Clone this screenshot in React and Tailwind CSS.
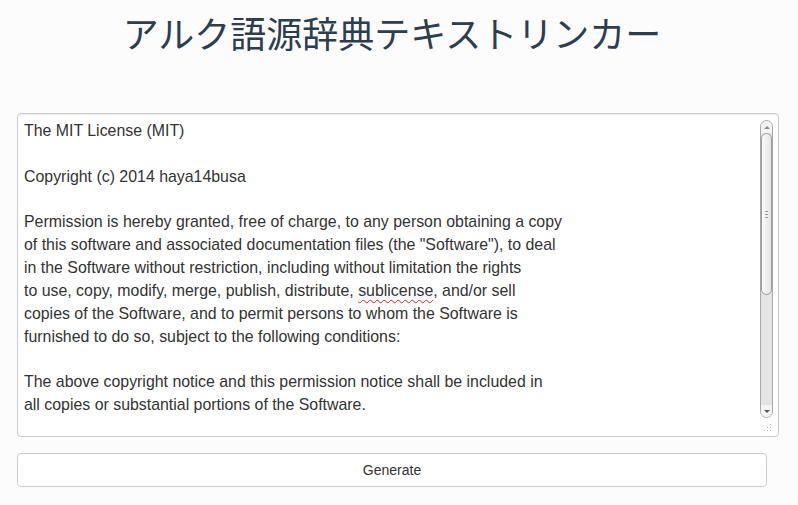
import React from 'react'

const body = [
  'Permission is hereby granted, free of charge, to any person obtaining a copy',
  'of this software and associated documentation files (the "Software"), to deal',
  'in the Software without restriction, including without limitation the rights',
]

export default function App() {
  return (
    <div className="min-h-screen w-[798px] h-[505px] overflow-hidden bg-[#fcfcfc]" style={{ fontFamily: '"Liberation Sans", Arial, sans-serif' }}>
      {/* Title */}
      <h1
        className="pt-[12px] pr-[14px] text-center text-[36px] leading-[40px] text-[#2c3e50]"
        style={{ fontFamily: '"Noto Sans CJK JP", "Noto Sans", sans-serif' }}
      >
        アルク語源辞典テキストリンカー
      </h1>

      {/* Textarea */}
      <div className="mt-[61px] ml-[17px] flex h-[324px] w-[762px] rounded-[4px] border border-[#cccccc] bg-white shadow-[inset_0_1px_1px_rgba(0,0,0,0.075)]">
        <div className="flex-1 overflow-hidden pl-[6px] pt-[6px] text-[15.9px] leading-[22.86px] text-[#333333] whitespace-pre">
          <div>The MIT License (MIT)</div>
          <div>&nbsp;</div>
          <div>Copyright (c) 2014 haya14busa</div>
          <div>&nbsp;</div>
          {body.map((l, i) => <div key={i}>{l}</div>)}
          <div>
            to use, copy, modify, merge, publish, distribute,{' '}
            <span className="underline decoration-wavy decoration-[#e02020] decoration-1 underline-offset-[3px]">sublicense</span>, and/or sell
          </div>
          <div>copies of the Software, and to permit persons to whom the Software is</div>
          <div>furnished to do so, subject to the following conditions:</div>
          <div>&nbsp;</div>
          <div>The above copyright notice and this permission notice shall be included in</div>
          <div>all copies or substantial portions of the Software.</div>
        </div>

        {/* Scrollbar */}
        <div className="mr-[5px] flex w-[13px] flex-col pt-[6px]">
          <div className="flex h-[298px] flex-col rounded-[7px] border border-[#a8a8a8] bg-[#e4e4e4]">
            <div className="flex h-[12px] items-center justify-center rounded-t-[6px] bg-[#f4f4f4]">
              <div className="h-0 w-0 border-x-[3px] border-b-[3px] border-x-transparent border-b-[#8a8a8a]" />
            </div>
            <div className="flex h-[162px] flex-col items-center justify-center gap-[2px] rounded-[6px] border border-[#9a9a9a] bg-gradient-to-r from-[#fafafa] to-[#e6e6e6]">
              <div className="h-px w-[3px] bg-[#999]" />
              <div className="h-px w-[3px] bg-[#999]" />
              <div className="h-px w-[3px] bg-[#999]" />
            </div>
            <div className="flex-1" />
            <div className="flex h-[12px] items-center justify-center rounded-b-[6px] bg-[#f4f4f4]">
              <div className="h-0 w-0 border-x-[3px] border-t-[3px] border-x-transparent border-t-[#555]" />
            </div>
          </div>
          <div className="mt-[6px] flex justify-end pr-[1px]">
            <svg width="10" height="9" viewBox="0 0 10 9">
              <g fill="#b0b0b0">
                <rect x="8" y="0" width="1" height="1" />
                <rect x="5" y="3" width="1" height="1" />
                <rect x="8" y="3" width="1" height="1" />
                <rect x="2" y="6" width="1" height="1" />
                <rect x="5" y="6" width="1" height="1" />
                <rect x="8" y="6" width="1" height="1" />
              </g>
            </svg>
          </div>
        </div>
      </div>

      {/* Button */}
      <button className="mt-[16px] ml-[17px] flex h-[34px] w-[750px] items-center justify-center rounded-[4px] border border-[#cccccc] bg-white text-[14px] text-[#333333]">
        Generate
      </button>
    </div>
  )
}
